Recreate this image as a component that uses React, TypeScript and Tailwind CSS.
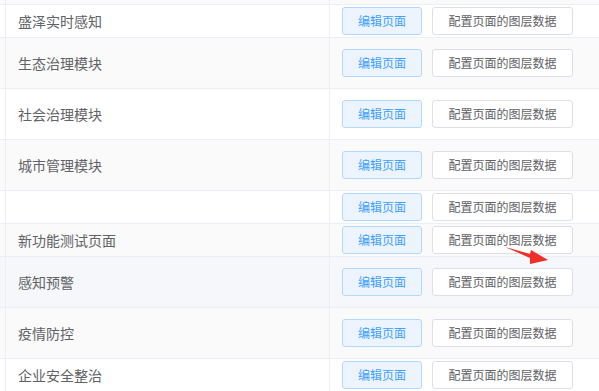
import React from "react";

type Row = { name: string; h: number; bg: string };

const rows: Row[] = [
  { name: "盛泽实时感知", h: 33, bg: "bg-white" },
  { name: "生态治理模块", h: 51, bg: "bg-[#fafafa]" },
  { name: "社会治理模块", h: 51, bg: "bg-white" },
  { name: "城市管理模块", h: 51, bg: "bg-[#fafafa]" },
  { name: "", h: 33, bg: "bg-white" },
  { name: "新功能测试页面", h: 33, bg: "bg-[#fafafa]" },
  { name: "感知预警", h: 51, bg: "bg-[#f5f7fa]" },
  { name: "疫情防控", h: 51, bg: "bg-[#fafafa]" },
  { name: "企业安全整治", h: 33, bg: "bg-white" },
];

const TableRow = ({ row }: { row: Row }) => (
  <div
    className={`flex border-b border-[#ebeef5] ${row.bg}`}
    style={{ height: row.h }}
  >
    <div className="w-[6px] border-r border-[#ebeef5]" />
    <div className="w-[324px] border-r border-[#ebeef5] flex items-center pl-[12px] text-[14px] text-[#606266]">
      {row.name}
    </div>
    <div className="flex-1 flex items-center pl-[12px]">
      <button className="h-[28px] w-[80px] rounded-[3px] border border-[#b3d8ff] bg-[#ecf5ff] text-[12px] text-[#409eff]">
        编辑页面
      </button>
      <button className="ml-[10px] h-[28px] w-[141px] rounded-[3px] border border-[#dcdfe6] bg-white text-[12px] text-[#606266]">
        配置页面的图层数据
      </button>
    </div>
  </div>
);

const App = () => {
  return (
    <div
      className="relative w-[599px] h-[391px] overflow-hidden bg-white"
      style={{ fontFamily: '"Noto Sans CJK SC", "Noto Sans", sans-serif' }}
    >
      <div className="flex h-[5px] border-b border-[#ebeef5] bg-[#fafafa]">
        <div className="w-[6px] border-r border-[#ebeef5]" />
        <div className="w-[324px] border-r border-[#ebeef5]" />
      </div>
      {rows.map((row, i) => (
        <TableRow key={i} row={row} />
      ))}
      <svg
        className="absolute left-0 top-0 pointer-events-none"
        width="599"
        height="391"
      >
        <polygon
          points="505,247 530,254 531,250 548,260 530,264 530,258"
          fill="#f02d26"
        />
      </svg>
    </div>
  );
};

export default App;
